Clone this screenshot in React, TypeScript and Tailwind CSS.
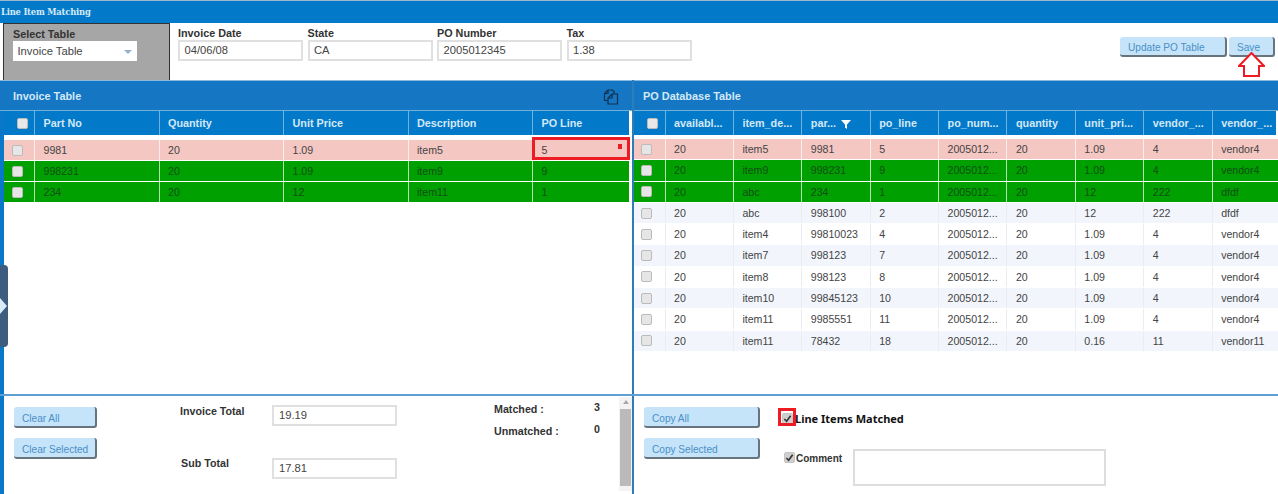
import React from 'react';

const invoiceCols = ['w-[124.5px]', 'w-[124.5px]', 'w-[124.5px]', 'w-[124.5px]', 'w-[97px]'];
const poCol = 'w-[68.4px]';

const invoiceHead = ['Part No', 'Quantity', 'Unit Price', 'Description', 'PO Line'];
const poHead = ['availabl...', 'item_de...', 'par...', 'po_line', 'po_num...', 'quantity', 'unit_pri...', 'vendor_...', 'vendor_...'];

type Tone = 'pink' | 'green' | 'tint' | 'plain';

const invoiceRows: { tone: Tone; cells: string[] }[] = [
  { tone: 'pink', cells: ['9981', '20', '1.09', 'item5', '5'] },
  { tone: 'green', cells: ['998231', '20', '1.09', 'item9', '9'] },
  { tone: 'green', cells: ['234', '20', '12', 'item11', '1'] },
];

const poRows: { tone: Tone; cells: string[] }[] = [
  { tone: 'pink', cells: ['20', 'item5', '9981', '5', '2005012...', '20', '1.09', '4', 'vendor4'] },
  { tone: 'green', cells: ['20', 'item9', '998231', '9', '2005012...', '20', '1.09', '4', 'vendor4'] },
  { tone: 'green', cells: ['20', 'abc', '234', '1', '2005012...', '20', '12', '222', 'dfdf'] },
  { tone: 'tint', cells: ['20', 'abc', '998100', '2', '2005012...', '20', '12', '222', 'dfdf'] },
  { tone: 'plain', cells: ['20', 'item4', '99810023', '4', '2005012...', '20', '1.09', '4', 'vendor4'] },
  { tone: 'tint', cells: ['20', 'item7', '998123', '7', '2005012...', '20', '1.09', '4', 'vendor4'] },
  { tone: 'plain', cells: ['20', 'item8', '998123', '8', '2005012...', '20', '1.09', '4', 'vendor4'] },
  { tone: 'tint', cells: ['20', 'item10', '99845123', '10', '2005012...', '20', '1.09', '4', 'vendor4'] },
  { tone: 'plain', cells: ['20', 'item11', '9985551', '11', '2005012...', '20', '1.09', '4', 'vendor4'] },
  { tone: 'tint', cells: ['20', 'item11', '78432', '18', '2005012...', '20', '0.16', '11', 'vendor11'] },
];

const toneClass: Record<Tone, string> = {
  pink: 'bg-[#f4c7c3] text-[#444]',
  green: 'bg-[#00a000] text-[#0f4f14]',
  tint: 'bg-[#f2f6fc] text-[#444]',
  plain: 'bg-white text-[#444]',
};

const Box = ({ className = '' }: { className?: string }) => (
  <span className={`block w-[11px] h-[11px] rounded-[2px] border border-[#bbb] bg-[#e6e6e6] ${className}`} />
);

const Checked = () => (
  <span className="shrink-0 flex items-center justify-center w-[11px] h-[11px] rounded-[2px] bg-[#cfcfcf] border border-[#c4c4c4]">
    <svg viewBox="0 0 10 10" className="w-[9px] h-[9px]">
      <path d="M1.5 5.5 L4 8 L8.5 2" fill="none" stroke="#333" strokeWidth="1.8" />
    </svg>
  </span>
);

const Field = ({ label, value }: { label: string; value: string }) => (
  <div className="w-[125px] shrink-0">
    <div className="text-[10.8px] leading-[13px] font-bold text-[#333]">{label}</div>
    <div className="h-[21px] border-2 border-[#e0e0e0] pl-[4.5px] text-[11.2px] leading-[17px] text-[#444]">{value}</div>
  </div>
);

const Btn = ({ label, width, height = 'h-[21px]' }: { label: string; width: string; height?: string }) => (
  <button className={`${width} ${height} rounded-[3px] bg-[#c5e3f9] border-r-2 border-b-2 border-[#67737d] text-left pl-[8px] pt-[3px] text-[10.1px] leading-[15px] text-[#4a90c8]`}>
    {label}
  </button>
);

const HeadCell = ({ label, width, filter }: { label: string; width: string; filter?: boolean }) => (
  <div className={`${width} shrink-0 flex items-center gap-[5px] border-l border-[#6fb0dd] pl-[8.5px] pt-[1px] text-[10.8px] font-bold text-[#d3e8f7]`}>
    {label}
    {filter && (
      <svg viewBox="0 0 10 10" className="w-[10px] h-[10px]">
        <path d="M0 1 H10 L6 5.5 V10 L4 8.5 V5.5 Z" fill="#fff" />
      </svg>
    )}
  </div>
);

export default function App() {
  return (
    <div className="relative w-[1278px] h-[494px] overflow-hidden bg-white font-['Liberation_Sans',Arial,sans-serif]">
      {/* title bar */}
      <div className="h-[23px] bg-[#0279c9] border-t border-[#9ab8cf] pl-[1px] text-[8.4px] leading-[22px] font-bold text-[#d6ebf8] font-['DejaVu_Serif',serif] tracking-[-0.2px]">
        Line Item Matching
      </div>

      {/* filter strip */}
      <div className="flex h-[57px]">
        <div className="w-[167px] shrink-0 ml-[3px] bg-[#a6a6a6] border-l border-t border-r border-[#333] pl-[9px] pt-[4px]">
          <div className="text-[10.8px] leading-[13px] font-bold text-[#333]">Select Table</div>
          <div className="flex items-center justify-between w-[124px] h-[20px] bg-white pl-[4.5px] pt-[1px] text-[11.2px] text-[#444]">
            Invoice Table
            <span className="mr-[5px] border-x-[4px] border-x-transparent border-t-[4px] border-t-[#8fb3d1]" />
          </div>
        </div>
        <div className="flex gap-[4.5px] ml-[8px] pt-[4px]">
          <Field label="Invoice Date" value="04/06/08" />
          <Field label="State" value="CA" />
          <Field label="PO Number" value="2005012345" />
          <Field label="Tax" value="1.38" />
        </div>
        <div className="ml-auto flex gap-[2px] pt-[14px] pr-[3px]">
          <Btn label="Update PO Table" width="w-[107px]" height="h-[20px]" />
          <Btn label="Save" width="w-[46px]" height="h-[20px]" />
        </div>
      </div>

      {/* two tables */}
      <div className="flex h-[316px] border-b-2 border-[#5f9fd3]">
        <div className="w-[632px] shrink-0 border-l-4 border-[#0a78c8] flex flex-col">
          <div className="flex items-center justify-between h-[31px] -ml-[4px] pl-[13px] pr-[13px] pt-[2px] bg-[#1577c4] border-t border-[#8ab8dc] border-b border-b-[#6fb0dd] text-[10.9px] font-bold text-[#d3e8f7]">
            Invoice Table
            <svg viewBox="0 0 16 16" className="w-[16px] h-[16px] mt-[1px]" fill="none" stroke="#10304c" strokeWidth="1.2">
              <path d="M5 1 H9.5 L11 2.5 V5 M5 1 L1.5 4.5 V11.5 H5" />
              <path d="M5 1 V4.5 H1.5" />
              <path d="M9 5 H14.5 V15 H5 V9 Z" />
              <path d="M9 5 V9 H5" />
            </svg>
          </div>
          <div className="flex h-[24px] w-[625px] bg-[#0279c9]">
            <div className="w-[30px] shrink-0 flex items-center justify-center pl-[7px]"><Box className="bg-[#e8e8e8]" /></div>
            {invoiceHead.map((h, i) => <HeadCell key={h} label={h} width={invoiceCols[i]} />)}
          </div>
          <div className="h-[5px]" />
          {invoiceRows.map((r, idx) => (
            <div key={idx} className={`flex w-[625px] h-[21px] border-b border-white ${toneClass[r.tone]}`}>
              <div className="w-[30px] shrink-0 flex items-center justify-center pr-[3px]"><Box /></div>
              {r.cells.map((c, i) => (
                <div key={i} className={`${invoiceCols[i]} shrink-0 h-full border-l border-white/70 pl-[8.5px] text-[10.6px] leading-[20px] truncate`}>{c}</div>
              ))}
            </div>
          ))}
        </div>
        <div className="flex-1 min-w-0 border-l-2 border-[#2d7db8] flex flex-col overflow-hidden">
          <div className="flex items-center h-[31px] pl-[9px] pt-[2px] bg-[#1577c4] border-t border-[#8ab8dc] border-b border-b-[#6fb0dd] text-[10.9px] font-bold text-[#d3e8f7]">
            PO Database Table
          </div>
          <div className="flex h-[24px] w-[642px] overflow-hidden bg-[#0279c9]">
            <div className="w-[30.5px] shrink-0 flex items-center justify-center pl-[6px]"><Box className="bg-[#e8e8e8]" /></div>
            {poHead.map((h, i) => <HeadCell key={i} label={h} width={poCol} filter={h === 'par...'} />)}
          </div>
          <div className="h-[4px]" />
          {poRows.map((r, idx) => (
            <div key={idx} className={`flex h-[21.3px] shrink-0 border-b border-white ${toneClass[r.tone]}`}>
              <div className="w-[30.5px] shrink-0 flex items-center justify-center pr-[6px]"><Box /></div>
              {r.cells.map((c, i) => (
                <div key={i} className={`${poCol} shrink-0 h-full border-l ${r.tone === 'tint' || r.tone === 'plain' ? 'border-[#e9edf2]' : 'border-white/70'} pl-[8.5px] text-[10.6px] leading-[20px] truncate`}>
                  {c}
                </div>
              ))}
            </div>
          ))}
        </div>
      </div>

      {/* footer */}
      <div className="flex h-[98px] overflow-hidden">
        <div className="relative w-[632px] shrink-0 border-l-4 border-[#0a78c8] flex pl-[10px] pt-[11px]">
          <div className="w-[148px] shrink-0 flex flex-col gap-[10px]">
            <Btn label="Clear All" width="w-[83px]" />
            <Btn label="Clear Selected" width="w-[83px]" />
          </div>
          <div className="w-[236px] shrink-0 -mt-[2px]">
            <div className="flex">
              <span className="w-[110px] pl-[18px] text-[10.7px] font-bold text-[#333] leading-[12px]">Invoice Total</span>
              <span className="w-[125px] h-[21px] border-2 border-[#e0e0e0] pl-[5px] text-[11.2px] leading-[17px] text-[#444]">19.19</span>
            </div>
            <div className="flex mt-[32px]">
              <span className="w-[110px] pl-[19px] text-[10.7px] font-bold text-[#333] leading-[10px]">Sub Total</span>
              <span className="w-[125px] h-[21px] border-2 border-[#e0e0e0] pl-[5px] text-[11.2px] leading-[17px] text-[#444]">17.81</span>
            </div>
          </div>
          <div className="ml-[96px] -mt-[5px] text-[10.7px] font-bold text-[#333] leading-[14px]">
            <div className="flex w-[106px] justify-between"><span>Matched :</span><span className="-mt-[2px]">3</span></div>
            <div className="flex w-[106px] justify-between mt-[8px]"><span>Unmatched :</span><span className="-mt-[2px]">0</span></div>
          </div>
          <div className="absolute right-0 top-[1px] w-[13px] h-[94px] bg-[#f3f3f3]">
            <div className="mx-auto mt-[3px] w-0 border-x-[3px] border-x-transparent border-b-[4px] border-b-[#a8a8a8]" />
            <div className="mx-auto mt-[5px] w-[11px] h-[77px] bg-[#bababa]" />
          </div>
        </div>
        <div className="flex-1 min-w-0 border-l-2 border-[#2d7db8] flex pl-[10px] pt-[11px]">
          <div className="w-[138px] shrink-0 flex flex-col gap-[10px]">
            <Btn label="Copy All" width="w-[116px]" />
            <Btn label="Copy Selected" width="w-[116px]" />
          </div>
          <div className="mt-[2px]">
            <div className="flex items-center h-[18px]">
              <Checked />
              <span className="ml-[2px] mt-[3px] text-[11px] font-bold text-[#111] font-['Noto_Sans',sans-serif] whitespace-nowrap">Line Items Matched</span>
            </div>
            <div className="flex mt-[22px] ml-[2px]">
              <div className="flex items-center w-[69px] h-[17px]">
                <Checked />
                <span className="ml-[1px] mt-[2px] text-[10px] font-bold text-[#333]">Comment</span>
              </div>
              <div className="w-[253px] h-[37px] border-2 border-[#ddd]" />
            </div>
          </div>
        </div>
      </div>

      {/* annotations over the screenshot */}
      <div className="absolute left-[532px] top-[137px] w-[98px] h-[23px] border-[3px] border-[#ed1c24]">
        <span className="absolute right-[5px] top-[4px] w-[4px] h-[5px] bg-[#ed1c24]" />
      </div>
      <div className="absolute left-[778px] top-[408px] w-[18px] h-[18px] border-[3px] border-[#ed1c24]" />
      <svg viewBox="0 0 27 25" className="absolute left-[1238px] top-[52px] w-[27px] h-[25px]" fill="#fff" stroke="#ed1c24" strokeWidth="2">
        <path d="M13.5 1 L26 14 H21 V24 H6 V14 H1 Z" />
      </svg>
      <div className="absolute left-0 top-[265px] w-[8px] h-[82px] rounded-r-[4px] bg-[#3d5d7e] flex items-center">
        <span className="border-y-[8px] border-y-transparent border-l-[7px] border-l-[#d8ecfa]" />
      </div>
    </div>
  );
}
